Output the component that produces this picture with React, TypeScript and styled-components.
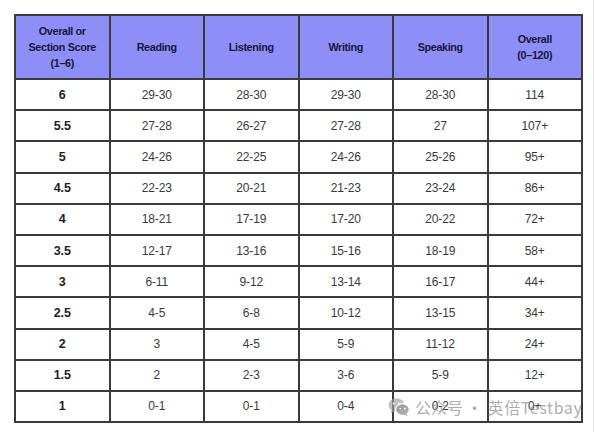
import React from 'react';
import styled, { createGlobalStyle } from 'styled-components';

const GlobalStyle = createGlobalStyle`
  html, body {
    margin: 0;
    padding: 0;
    background: #ffffff;
  }
`;

type Row = [string, string, string, string, string, string];

const headers = ['Overall or\nSection Score\n(1–6)', 'Reading', 'Listening', 'Writing', 'Speaking', 'Overall\n(0–120)'];

const rows: Row[] = [
  ['6', '29-30', '28-30', '29-30', '28-30', '114'],
  ['5.5', '27-28', '26-27', '27-28', '27', '107+'],
  ['5', '24-26', '22-25', '24-26', '25-26', '95+'],
  ['4.5', '22-23', '20-21', '21-23', '23-24', '86+'],
  ['4', '18-21', '17-19', '17-20', '20-22', '72+'],
  ['3.5', '12-17', '13-16', '15-16', '18-19', '58+'],
  ['3', '6-11', '9-12', '13-14', '16-17', '44+'],
  ['2.5', '4-5', '6-8', '10-12', '13-15', '34+'],
  ['2', '3', '4-5', '5-9', '11-12', '24+'],
  ['1.5', '2', '2-3', '3-6', '5-9', '12+'],
  ['1', '0-1', '0-1', '0-4', '0-2', '0+'],
];

const Page = styled.div`
  position: relative;
  width: 594px;
  height: 432px;
  box-sizing: border-box;
  padding: 14px 0 0 14px;
  border-right: 1px solid #e2e2e2;
  overflow: hidden;
`;

const ScoreTable = styled.table`
  width: 569px;
  border-collapse: collapse;
  table-layout: fixed;
  border: 2px solid #3a3a3a;
  font-family: 'Liberation Sans', Arial, sans-serif;
`;

const HeadCell = styled.th`
  height: 62px;
  padding: 0;
  background: #8e8ff6;
  border: 2px solid #3a3a3a;
  color: #17173a;
  font-size: 10.8px;
  font-weight: 700;
  letter-spacing: -0.35px;
  line-height: 16px;
  text-align: center;
  white-space: pre-line;
`;

const Cell = styled.td<{ $lead: boolean }>`
  height: 29.2px;
  padding: 0;
  border: 2px solid #3a3a3a;
  text-align: center;
  font-size: ${(p) => (p.$lead ? '12.5px' : '12px')};
  font-weight: ${(p) => (p.$lead ? 700 : 400)};
  color: ${(p) => (p.$lead ? '#1e1e1e' : '#3a3a3a')};
  letter-spacing: ${(p) => (p.$lead ? '-0.2px' : '-0.1px')};
`;

const Watermark = styled.div`
  position: absolute;
  left: 388px;
  top: 396px;
  display: flex;
  align-items: center;
  gap: 5px;
  color: rgba(135, 135, 135, 0.7);
  font-family: 'Noto Sans CJK SC', 'Noto Sans', sans-serif;
  font-size: 16px;
  line-height: 22px;
  pointer-events: none;
`;

const Brand = styled.span`
  letter-spacing: 0.6px;
`;

const WechatIcon = () => (
  <svg width="22" height="20" viewBox="0 0 22 20">
    <ellipse cx="8.5" cy="8" rx="8" ry="6.8" fill="rgba(160,160,160,0.65)" />
    <path d="M3.5 13 L2.6 16.4 L6.6 14.2 Z" fill="rgba(160,160,160,0.65)" />
    <ellipse cx="14.5" cy="12.5" rx="6.8" ry="5.8" fill="rgba(150,150,150,0.8)" stroke="#fff" strokeWidth="1.2" />
    <path d="M18 16.6 L19.6 19.2 L15.8 17.6 Z" fill="rgba(150,150,150,0.8)" />
    <circle cx="5.6" cy="6.4" r="1" fill="#fff" />
    <circle cx="10.8" cy="6.4" r="1" fill="#fff" />
    <circle cx="12.2" cy="11.6" r="0.9" fill="#fff" />
    <circle cx="16.8" cy="11.6" r="0.9" fill="#fff" />
  </svg>
);

export default function App() {
  return (
    <Page>
      <GlobalStyle />
      <ScoreTable>
        <thead>
          <tr>
            {headers.map((h) => (
              <HeadCell key={h}>{h}</HeadCell>
            ))}
          </tr>
        </thead>
        <tbody>
          {rows.map((row) => (
            <tr key={row[0]}>
              {row.map((value, i) => (
                <Cell key={i} $lead={i === 0}>
                  {value}
                </Cell>
              ))}
            </tr>
          ))}
        </tbody>
      </ScoreTable>
      <Watermark>
        <WechatIcon />
        <span>公众号 · </span>
        <Brand>英倍Testbay</Brand>
      </Watermark>
    </Page>
  );
}
